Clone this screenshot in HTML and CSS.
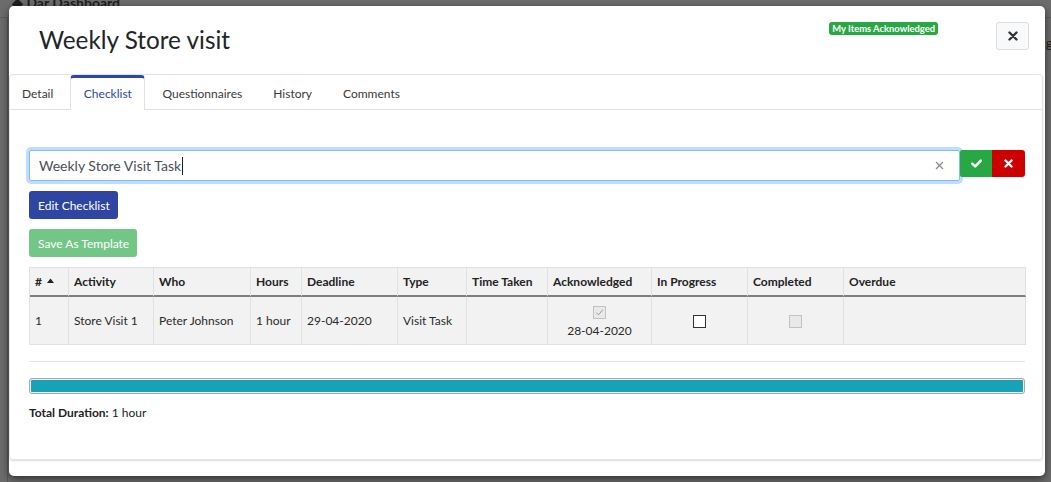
FILE: index.html
```html
<!DOCTYPE html>
<html lang="en">
<head>
<meta charset="utf-8">
<title>Weekly Store visit</title>
<link rel="stylesheet" href="styles.css">
</head>
<body>
<div class="page">
  <div class="page-top"><span class="crumb">&#9670; Dar Dashboard</span><span class="crumb-right">g</span></div>
  <div class="page-side"></div>
</div>

<div class="modal">
  <div class="modal-header">
    <h4 class="modal-title">Weekly Store visit</h4>
    <span class="badge">My Items Acknowledged</span>
    <button class="close-btn" type="button" aria-label="Close">
      <svg width="10" height="10" viewBox="0 0 10 10"><path d="M1.5 1.5 L8.5 8.5 M8.5 1.5 L1.5 8.5" stroke="#333" stroke-width="2.4" stroke-linecap="round"/></svg>
    </button>
  </div>

  <div class="card">
    <ul class="tabs">
      <li class="tab">Detail</li>
      <li class="tab active">Checklist</li>
      <li class="tab">Questionnaires</li>
      <li class="tab">History</li>
      <li class="tab">Comments</li>
    </ul>

    <div class="pane">
      <div class="input-group">
        <div class="field">
          <span class="field-text">Weekly Store Visit Task</span><span class="caret"></span>
          <svg class="clear" width="9" height="9" viewBox="0 0 9 9"><path d="M1 1 L8 8 M8 1 L1 8" stroke="#8a8a8a" stroke-width="1.2"/></svg>
        </div>
        <button class="ig-btn ok" type="button" aria-label="Save">
          <svg width="11" height="9" viewBox="0 0 11 9"><path d="M1.2 4.6 L4.2 7.4 L9.8 1.6" stroke="#fff" stroke-width="2.5" fill="none" stroke-linecap="round" stroke-linejoin="round"/></svg>
        </button>
        <button class="ig-btn cancel" type="button" aria-label="Cancel">
          <svg width="9" height="9" viewBox="0 0 9 9"><path d="M1.5 1.5 L7.5 7.5 M7.5 1.5 L1.5 7.5" stroke="#fff" stroke-width="2.4" stroke-linecap="round"/></svg>
        </button>
      </div>

      <button class="btn btn-primary" type="button">Edit Checklist</button>
      <button class="btn btn-success" type="button" disabled>Save As Template</button>

      <table class="grid">
        <colgroup>
          <col class="c1"><col class="c2"><col class="c3"><col class="c4"><col class="c5"><col class="c6">
          <col class="c7"><col class="c8"><col class="c9"><col class="c10"><col class="c11">
        </colgroup>
        <thead>
          <tr>
            <th># <svg class="sort" width="7" height="5" viewBox="0 0 7 5"><path d="M0 5 L3.5 0.5 L7 5 Z" fill="#222"/></svg></th>
            <th>Activity</th>
            <th>Who</th>
            <th>Hours</th>
            <th>Deadline</th>
            <th>Type</th>
            <th>Time Taken</th>
            <th>Acknowledged</th>
            <th>In Progress</th>
            <th>Completed</th>
            <th>Overdue</th>
          </tr>
        </thead>
        <tbody>
          <tr>
            <td>1</td>
            <td>Store Visit 1</td>
            <td>Peter Johnson</td>
            <td>1 hour</td>
            <td>29-04-2020</td>
            <td>Visit Task</td>
            <td></td>
            <td class="center">
              <span class="cb cb-disabled"><svg width="11" height="11" viewBox="0 0 11 11"><path d="M2.3 5.6 L4.5 7.8 L8.8 2.8" stroke="#9a9a9a" stroke-width="1" fill="none"/></svg></span>
              <div class="ack-date">28-04-2020</div>
            </td>
            <td class="center"><span class="cb"></span></td>
            <td class="center"><span class="cb cb-disabled"></span></td>
            <td></td>
          </tr>
        </tbody>
      </table>

      <hr class="sep">

      <div class="progress"><div class="bar" style="width:100%"></div></div>

      <div class="total"><b>Total Duration:</b> 1 hour</div>
    </div>
  </div>
</div>
</body>
</html>
```

FILE: styles.css
```css
* { box-sizing: border-box; }

html, body {
  margin: 0;
  padding: 0;
  width: 1051px;
  height: 482px;
  overflow: hidden;
}

body {
  background: #6c6c6c;
  font-family: Lato, "Open Sans", Arial, sans-serif;
  color: #212529;
  position: relative;
}

.page { height: 482px; }

.page-top {
  height: 18px;
  border-bottom: 1px solid #5e5e5e;
  position: relative;
  display: flex;
  justify-content: space-between;
}

.crumb {
  font-family: Lato, sans-serif;
  font-weight: 700;
  font-size: 14px;
  color: #1e1e1e;
  margin: -4px 0 0 12px;
  line-height: 14px;
  height: 10px;
  overflow: hidden;
}

.crumb-right {
  font-family: Lato, sans-serif;
  font-size: 14px;
  color: #1e1e1e;
  margin: 36px -2px 0 0;
  line-height: 14px;
}

.page-side {
  width: 8px;
  height: 464px;
  border-right: 1px solid #5a5a5a;
}

/* ---------- modal ---------- */
.modal {
  position: absolute;
  left: 9px;
  top: 6px;
  width: 1036px;
  height: 470px;
  background: #fff;
  border-radius: 5px;
  box-shadow: 0 3px 9px rgba(0, 0, 0, 0.55);
  display: flex;
  flex-direction: column;
}

.modal-header {
  height: 68px;
  display: flex;
  align-items: flex-start;
  padding: 16px 16px 0 30px;
}

.modal-title {
  margin: 4px 0 0 0;
  font-size: 24.3px;
  line-height: 28px;
  font-weight: 400;
  color: #212529;
  flex: 1;
}

.badge {
  background: #28a745;
  color: #fff;
  font-size: 9.4px;
  font-weight: 700;
  line-height: 13px;
  height: 13px;
  padding: 0 3px;
  border-radius: 3px;
  margin-right: 58px;
  white-space: nowrap;
}

.close-btn {
  width: 33px;
  height: 28px;
  border: 1px solid #dcdcdc;
  border-radius: 3px;
  background: #f8f9fa;
  padding: 0;
  display: flex;
  align-items: center;
  justify-content: center;
}

/* ---------- card with tabs ---------- */
.card {
  flex: 1;
  margin: 0 2px 16px 0;
  border: 1px solid #e3e3e3;
  border-radius: 4px;
  box-shadow: 0 1px 2px rgba(0, 0, 0, 0.14);
  display: flex;
  flex-direction: column;
}

.tabs {
  list-style: none;
  margin: 0;
  padding: 0;
  height: 35px;
  display: flex;
  border-bottom: 1px solid #dee2e6;
}

.tab {
  height: 35px;
  padding: 0 13px;
  margin-right: 3px;
  border-top: 3px solid transparent;
  border-left: 1px solid transparent;
  border-right: 1px solid transparent;
  font-size: 12px;
  line-height: 31px;
  color: #3a3a3a;
  white-space: nowrap;
}

.tab:first-child { padding-left: 11px; }

.tab.active {
  color: #2e47a3;
  border-top-color: #2e47a3;
  border-left-color: #dee2e6;
  border-right-color: #dee2e6;
  border-radius: 4px 4px 0 0;
  background: #fff;
  margin-bottom: -1px;
  height: 35px;
  padding: 0 12.5px;
}

.pane {
  padding: 40px 17px 0 19px;
}

/* ---------- input group ---------- */
.input-group {
  display: flex;
  align-items: flex-start;
  height: 31px;
  margin-bottom: 10px;
}

.field {
  flex: 1;
  height: 31px;
  border: 1px solid #80bdff;
  border-radius: 2px;
  box-shadow: 0 0 0 3px rgba(0, 123, 255, 0.25);
  display: flex;
  align-items: center;
  padding: 0 15px 0 9px;
  font-size: 14px;
  color: #495057;
}

.field-text { white-space: nowrap; }

.caret {
  width: 1px;
  height: 18px;
  background: #222;
  margin-left: 1px;
}

.clear { margin-left: auto; }

.ig-btn {
  position: relative;
  z-index: 1;
  width: 33px;
  height: 27px;
  border: none;
  padding: 0;
  display: flex;
  align-items: center;
  justify-content: center;
}

.ig-btn.ok { background: #28a745; border-radius: 2px 0 0 2px; width: 32px; }
.ig-btn.cancel { background: #cc0000; border-radius: 0 3px 3px 0; }

/* ---------- buttons ---------- */
.btn {
  display: block;
  height: 28px;
  padding: 0 8px 0 9px;
  border: none;
  border-radius: 3px;
  color: #fff;
  font-family: Lato, sans-serif;
  font-size: 12px;
  margin-bottom: 10px;
}

.btn-primary { background: #2e46a1; }
.btn-success { background: #74c687; }

/* ---------- table ---------- */
.grid {
  width: 997px;
  table-layout: fixed;
  border-collapse: separate;
  border-spacing: 0;
  border-top: 1px solid #dee2e6;
  border-left: 1px solid #dee2e6;
  background: #f2f2f2;
  font-size: 12px;
}

.c1 { width: 39px; }
.c2 { width: 85px; }
.c3 { width: 97px; }
.c4 { width: 51px; }
.c5 { width: 96px; }
.c6 { width: 69px; }
.c7 { width: 81px; }
.c8 { width: 104px; }
.c9 { width: 96px; }
.c10 { width: 96px; }
.c11 { width: 182px; }

.grid th,
.grid td {
  border-right: 1px solid #dee2e6;
  border-bottom: 1px solid #dee2e6;
  padding: 0 5px;
  text-align: left;
  vertical-align: middle;
  white-space: nowrap;
  overflow: hidden;
}

.grid th {
  height: 29px;
  font-weight: 700;
  color: #222;
  border-bottom: 2px solid #7d7d7d;
}

.grid td {
  height: 48px;
  color: #2a2a2a;
}

.grid td.center { text-align: center; }

.sort { vertical-align: 3px; margin-left: 2px; }

.cb {
  display: inline-block;
  width: 13px;
  height: 13px;
  border: 1px solid #333;
  background: #fff;
  vertical-align: middle;
  position: relative;
}

.cb-disabled {
  border-color: #c2c2c2;
  background: #e9e9e9;
}

.cb svg { position: absolute; left: 0; top: 0; }

.ack-date {
  margin-top: 5px;
  line-height: 14px;
}

/* ---------- footer area ---------- */
.sep {
  border: none;
  border-top: 1px solid #e4e4e4;
  margin: 16px 0 16px 0;
  width: 996px;
}

.progress {
  width: 996px;
  height: 16px;
  border: 1px solid #a8a8a8;
  border-radius: 3px;
  padding: 1px;
  background: #eee;
}

.bar {
  height: 100%;
  background: #17a2b8;
  border-radius: 1px;
}

.total {
  margin-top: 10px;
  font-size: 12px;
  line-height: 18px;
  color: #222;
}

.total b { font-weight: 700; }
```
